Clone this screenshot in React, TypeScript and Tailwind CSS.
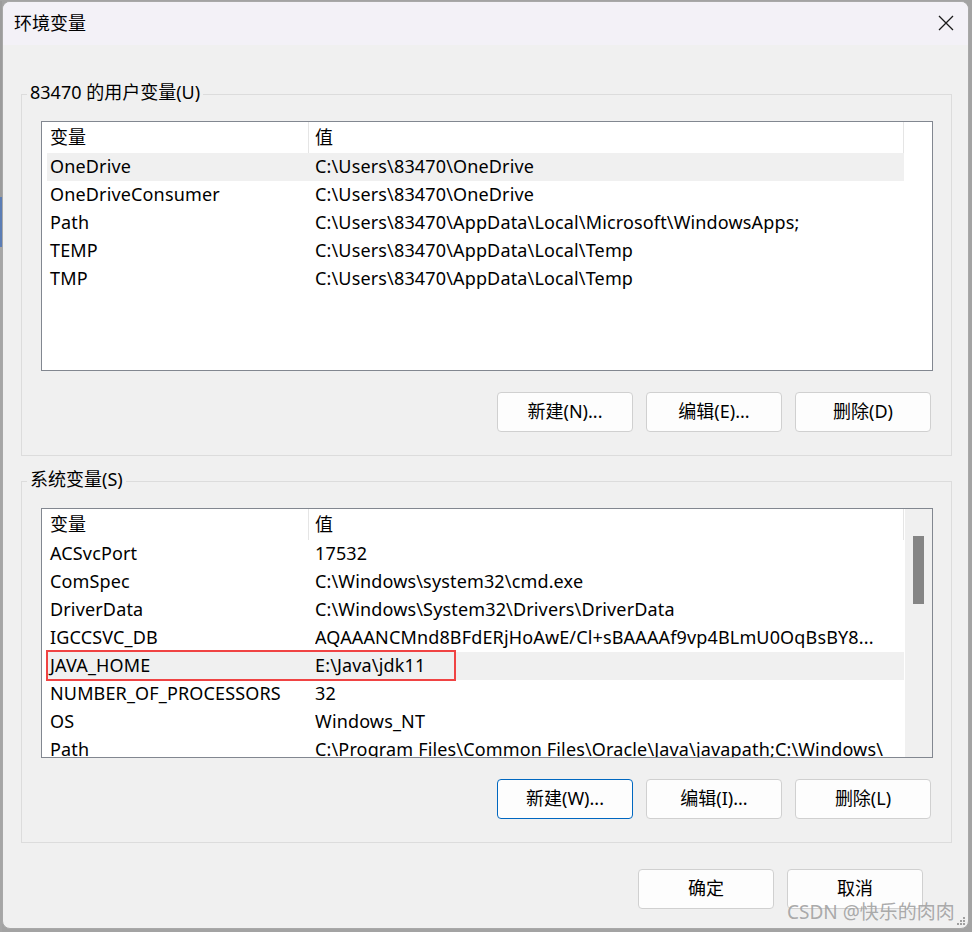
import React from 'react';

type Row = [string, string];

const userRows: Row[] = [
  ['OneDrive', 'C:\\Users\\83470\\OneDrive'],
  ['OneDriveConsumer', 'C:\\Users\\83470\\OneDrive'],
  ['Path', 'C:\\Users\\83470\\AppData\\Local\\Microsoft\\WindowsApps;'],
  ['TEMP', 'C:\\Users\\83470\\AppData\\Local\\Temp'],
  ['TMP', 'C:\\Users\\83470\\AppData\\Local\\Temp'],
];

const systemRows: Row[] = [
  ['ACSvcPort', '17532'],
  ['ComSpec', 'C:\\Windows\\system32\\cmd.exe'],
  ['DriverData', 'C:\\Windows\\System32\\Drivers\\DriverData'],
  ['IGCCSVC_DB', 'AQAAANCMnd8BFdERjHoAwE/Cl+sBAAAAf9vp4BLmU0OqBsBY8...'],
  ['JAVA_HOME', 'E:\\Java\\jdk11'],
  ['NUMBER_OF_PROCESSORS', '32'],
  ['OS', 'Windows_NT'],
  ['Path', 'C:\\Program Files\\Common Files\\Oracle\\Java\\javapath;C:\\Windows\\'],
];

function ListView({ rows, selected, scrollbar, boxed }: { rows: Row[]; selected: number; scrollbar?: boolean; boxed?: number }) {
  return (
    <div className="relative h-[250px] border border-[#828790] bg-white flex overflow-hidden">
      <div className="flex-1 flex flex-col overflow-hidden">
        <div className="h-[31px] flex shrink-0">
          <div className="w-[267px] pl-[8px] pb-[1px] flex items-center border-r border-[#e5e5e5]">变量</div>
          <div className="w-[595px] pl-[6px] pb-[1px] flex items-center border-r border-[#e5e5e5]">值</div>
        </div>
        <div className="pl-[5px] flex flex-col">
          {rows.map((r, i) => (
            <div
              key={r[0] + i}
              className={
                'h-[28px] w-[857px] flex items-center pb-[2px] shrink-0 tracking-[0.15px] ' +
                (i === selected ? 'bg-[#f0f0f0]' : '')
              }
            >
              <div className="w-[268px] pl-[3px] whitespace-nowrap">{r[0]}</div>
              <div className="flex-1 whitespace-nowrap overflow-hidden">{r[1]}</div>
            </div>
          ))}
        </div>
      </div>
      {scrollbar && (
        <div className="w-[27px] bg-[#f0f0f0] flex justify-center pt-[27px]">
          <div className="w-[11px] h-[68px] bg-[#858585]" />
        </div>
      )}
      {boxed !== undefined && (
        <div
          className="absolute left-[4px] w-[410px] h-[31px] border-2 border-[#f04343]"
          style={{ top: 31 + boxed * 28 - 2 }}
        />
      )}
    </div>
  );
}

function Btn({ label, focused }: { label: string; focused?: boolean }) {
  return (
    <button
      className={
        'w-[136px] h-[40px] pb-[2px] rounded-[4px] bg-[#fdfdfd] border text-[18px] text-black ' +
        (focused ? 'border-[#0067c0]' : 'border-[#d0d0d0]')
      }
    >
      {label}
    </button>
  );
}

function Group({ title, children }: { title: string; children: React.ReactNode }) {
  return (
    <fieldset className="border border-[#dcdcdc] p-0 m-0">
      <legend className="ml-[5px] px-[3px] leading-[24px]">
        <span className="relative -top-[2px]">{title}</span>
      </legend>
      <div className="pt-[15px] pl-[19px] pr-[18px] pb-[23px]">{children}</div>
    </fieldset>
  );
}

export default function App() {
  return (
    <div
      className="w-[972px] h-[932px] bg-[#a3a3a3] flex pt-[1px] text-[18px] text-black overflow-hidden"
      style={{ fontFamily: '"Noto Sans", "Noto Sans CJK SC", sans-serif' }}
    >
      <div className="w-[2px] flex flex-col">
        <div className="h-[196px] bg-[#9c9c9c]" />
        <div className="h-[50px] bg-[#5b7db5]" />
        <div className="flex-1 bg-[#a6a6a6]" />
      </div>
      <div className="relative w-[967px] h-[928px] rounded-[8px] border border-[#a8a8a8] bg-[#f0f0f0] flex flex-col overflow-hidden">
        {/* title bar */}
        <div className="h-[43px] bg-[#f3f1f7] flex items-center justify-between pl-[11px] pr-[14px] pb-[1px] shrink-0">
          <span className="leading-[24px]">环境变量</span>
          <svg width="16" height="16" viewBox="0 0 16 16" fill="none" stroke="#1a1a1a" strokeWidth="1.3">
            <path d="M1 1 L15 15 M15 1 L1 15" />
          </svg>
        </div>

        <div className="flex flex-col pl-[18px] pr-[16px]">
          <div className="mt-[37px]">
            <Group title="83470 的用户变量(U)">
              <ListView rows={userRows} selected={0} />
              <div className="flex justify-end gap-[13px] pr-[2px] mt-[21px]">
                <Btn label="新建(N)..." />
                <Btn label="编辑(E)..." />
                <Btn label="删除(D)" />
              </div>
            </Group>
          </div>

          <div className="mt-[13px]">
            <Group title="系统变量(S)">
              <ListView rows={systemRows} selected={4} scrollbar boxed={4} />
              <div className="flex justify-end gap-[13px] pr-[2px] mt-[21px]">
                <Btn label="新建(W)..." focused />
                <Btn label="编辑(I)..." />
                <Btn label="删除(L)" />
              </div>
            </Group>
          </div>

          <div className="flex justify-end gap-[13px] pr-[29px] mt-[26px]">
            <Btn label="确定" />
            <Btn label="取消" />
          </div>
        </div>

        {/* watermark */}
        <div className="absolute left-[784px] top-[898px] leading-[24px] text-[19px] text-[#a0a0a0]/90 whitespace-nowrap">
          CSDN @快乐的肉肉
        </div>
        <svg className="absolute right-[2px] bottom-[2px]" width="10" height="10" viewBox="0 0 10 10" fill="#a0a0a0">
          <rect x="7" y="1" width="2" height="2" />
          <rect x="4" y="4" width="2" height="2" />
          <rect x="7" y="4" width="2" height="2" />
          <rect x="1" y="7" width="2" height="2" />
          <rect x="4" y="7" width="2" height="2" />
          <rect x="7" y="7" width="2" height="2" />
        </svg>
      </div>
    </div>
  );
}
